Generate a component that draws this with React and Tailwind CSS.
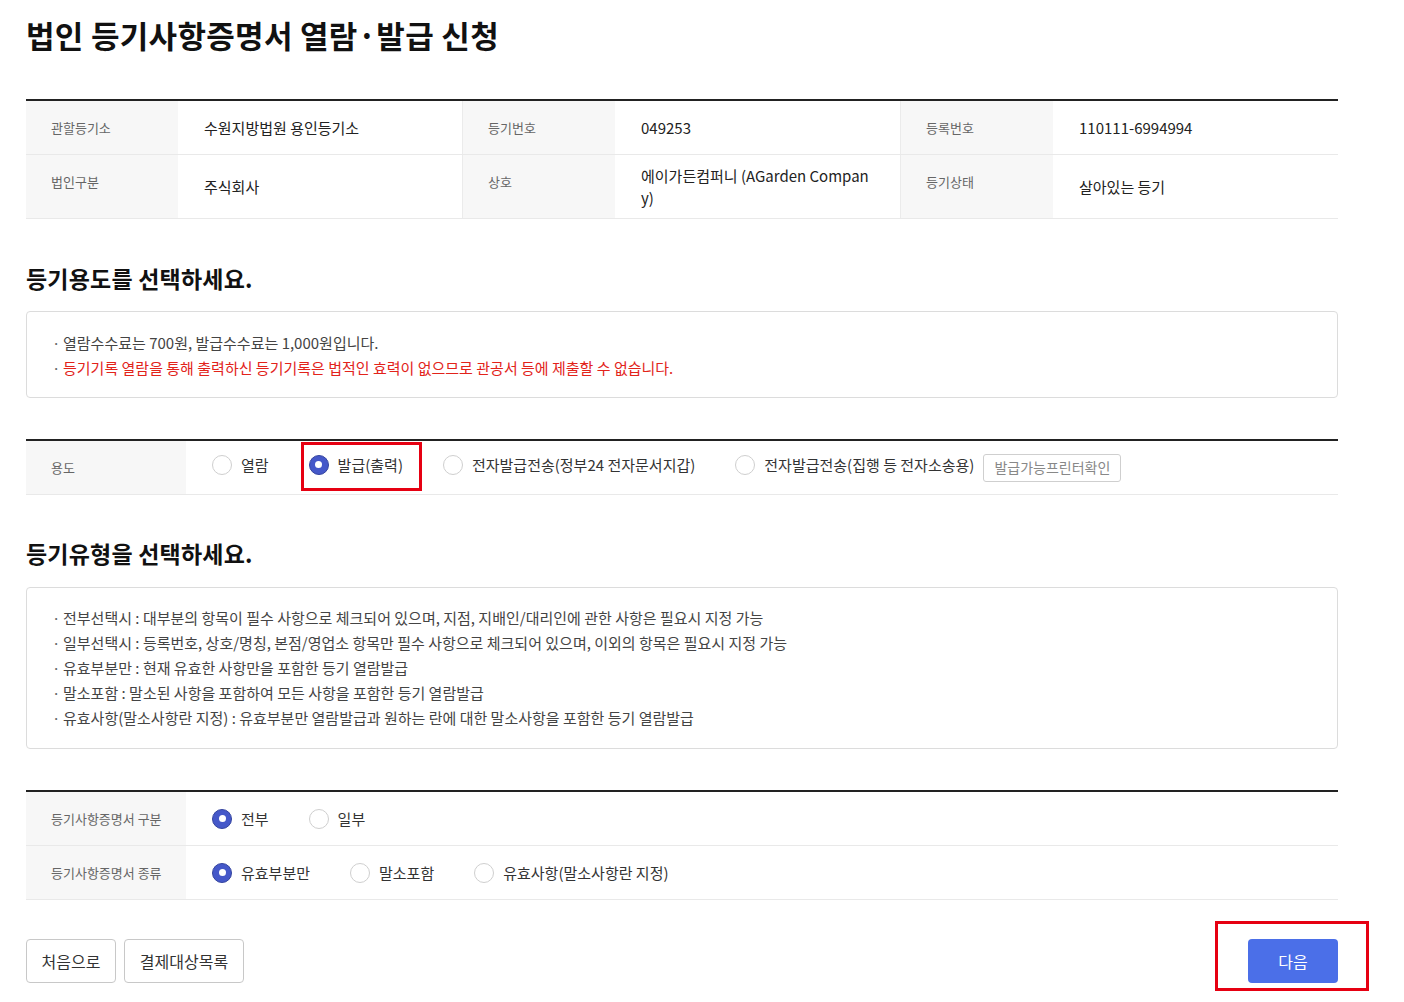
import React from "react";

const FONT = { fontFamily: '"Noto Sans CJK KR", "Noto Sans", sans-serif' };

function Radio({ checked, label, className = "" }) {
  return (
    <label className={"flex items-center gap-[9px] text-[15px] leading-[22px] text-[#333] " + className}>
      {checked ? (
        <span className="flex h-[20px] w-[20px] shrink-0 items-center justify-center rounded-full border border-[#34449f] bg-[#4558c9]">
          <span className="h-[7px] w-[7px] rounded-full bg-white" />
        </span>
      ) : (
        <span className="h-[20px] w-[20px] shrink-0 rounded-full border border-[#cfcfcf] bg-white" />
      )}
      <span>{label}</span>
    </label>
  );
}

function Label({ children, className = "" }) {
  return (
    <div className={"whitespace-nowrap bg-[#f7f7f7] pl-[25px] pr-[10px] text-[13px] text-[#666] " + className}>
      {children}
    </div>
  );
}

function Value({ children, className = "" }) {
  return (
    <div className={"flex items-center bg-white px-[26px] text-[15px] leading-[22px] text-[#222] " + className}>
      {children}
    </div>
  );
}

function Bullet({ children, red }) {
  return (
    <div className={"flex leading-[25px] " + (red ? "text-[#e2231a]" : "text-[#444]")}>
      <span className="w-[11px] shrink-0 text-[#666]">·</span>
      <span>{children}</span>
    </div>
  );
}

export default function App() {
  const cols = "grid grid-cols-[152px_284px_153px_285px_153px_285px] border-b border-[#e9e9e9]";
  return (
    <div style={FONT} className="min-h-[1002px] bg-white">
      <div className="ml-[26px] w-[1312px] pt-[15px]">
        <h1 className="text-[31px] font-bold leading-[40px] tracking-[0.3px] text-[#111]">
          법인 등기사항증명서 열람·발급 신청
        </h1>

        {/* Info table */}
        <div className="mt-[44px] border-t-2 border-[#222]">
          <div className={cols}>
            <Label className="h-[53px] pt-[16px] leading-[22px]">관할등기소</Label>
            <Value>수원지방법원 용인등기소</Value>
            <Label className="border-l border-[#ebebeb] pt-[16px] leading-[22px]">등기번호</Label>
            <Value>049253</Value>
            <Label className="border-l border-[#ebebeb] pt-[16px] leading-[22px]">등록번호</Label>
            <Value>110111-6994994</Value>
          </div>
          <div className={cols}>
            <Label className="h-[63px] pt-[16px] leading-[22px]">법인구분</Label>
            <Value>주식회사</Value>
            <Label className="border-l border-[#ebebeb] pt-[16px] leading-[22px]">상호</Label>
            <Value className="break-all">에이가든컴퍼니 (AGarden Company)</Value>
            <Label className="border-l border-[#ebebeb] pt-[16px] leading-[22px]">등기상태</Label>
            <Value>살아있는 등기</Value>
          </div>
        </div>

        <h2 className="mt-[44px] text-[23px] font-bold leading-[30px] tracking-[0.2px] text-[#111]">
          등기용도를 선택하세요.
        </h2>
        <div className="mt-[18px] rounded-[4px] border border-[#dcdcdc] px-[25px] pb-[17px] pt-[18px] text-[15px]">
          <Bullet>열람수수료는 700원, 발급수수료는 1,000원입니다.</Bullet>
          <Bullet red>등기기록 열람을 통해 출력하신 등기기록은 법적인 효력이 없으므로 관공서 등에 제출할 수 없습니다.</Bullet>
        </div>

        {/* 용도 */}
        <div className="mt-[41px] border-t-2 border-[#222]">
          <div className="flex h-[54px] border-b border-[#e9e9e9]">
            <Label className="flex w-[160px] shrink-0 items-center">용도</Label>
            <div className="flex items-center gap-[40px] pl-[26px]">
              <Radio label="열람" className="mb-[6px]" />
              <div className="relative mb-[6px]">
                <Radio checked label="발급(출력)" />
                <span className="pointer-events-none absolute -bottom-[15px] -left-[8px] -right-[19px] -top-[12px] border-[3px] border-[#e60012]" />
              </div>
              <Radio label="전자발급전송(정부24 전자문서지갑)" className="mb-[6px]" />
              <div className="flex items-center gap-[9px]">
                <Radio label="전자발급전송(집행 등 전자소송용)" className="mb-[6px]" />
                <button className="h-[28px] rounded-[3px] border border-[#cfcfcf] bg-white px-[10px] text-[14px] text-[#888]">
                  발급가능프린터확인
                </button>
              </div>
            </div>
          </div>
        </div>

        <h2 className="mt-[43px] text-[23px] font-bold leading-[30px] tracking-[0.2px] text-[#111]">
          등기유형을 선택하세요.
        </h2>
        <div className="mt-[19px] rounded-[4px] border border-[#dcdcdc] px-[25px] pb-[18px] pt-[17px] text-[15px]">
          <Bullet>전부선택시 : 대부분의 항목이 필수 사항으로 체크되어 있으며, 지점, 지배인/대리인에 관한 사항은 필요시 지정 가능</Bullet>
          <Bullet>일부선택시 : 등록번호, 상호/명칭, 본점/영업소 항목만 필수 사항으로 체크되어 있으며, 이외의 항목은 필요시 지정 가능</Bullet>
          <Bullet>유효부분만 : 현재 유효한 사항만을 포함한 등기 열람발급</Bullet>
          <Bullet>말소포함 : 말소된 사항을 포함하여 모든 사항을 포함한 등기 열람발급</Bullet>
          <Bullet>유효사항(말소사항란 지정) : 유효부분만 열람발급과 원하는 란에 대한 말소사항을 포함한 등기 열람발급</Bullet>
        </div>

        {/* 구분/종류 */}
        <div className="mt-[41px] border-t-2 border-[#222]">
          <div className="flex h-[54px] border-b border-[#e9e9e9]">
            <Label className="flex w-[160px] shrink-0 items-center">등기사항증명서 구분</Label>
            <div className="flex items-center gap-[40px] pl-[26px]">
              <Radio checked label="전부" />
              <Radio label="일부" />
            </div>
          </div>
          <div className="flex h-[54px] border-b border-[#e9e9e9]">
            <Label className="flex w-[160px] shrink-0 items-center">등기사항증명서 종류</Label>
            <div className="flex items-center gap-[40px] pl-[26px]">
              <Radio checked label="유효부분만" />
              <Radio label="말소포함" />
              <Radio label="유효사항(말소사항란 지정)" />
            </div>
          </div>
        </div>

        {/* Buttons */}
        <div className="mt-[39px] flex items-start justify-between">
          <div className="flex gap-[8px]">
            <button className="h-[44px] w-[90px] rounded-[4px] border border-[#c8c8c8] bg-white text-[16px] text-[#333]">
              처음으로
            </button>
            <button className="h-[44px] w-[120px] rounded-[4px] border border-[#c8c8c8] bg-white text-[16px] text-[#333]">
              결제대상목록
            </button>
          </div>
          <div className="relative">
            <button className="h-[44px] w-[90px] rounded-[4px] bg-[#4b6fe8] text-[16px] text-white">
              다음
            </button>
            <span className="pointer-events-none absolute -bottom-[8px] -left-[33px] -right-[31px] -top-[18px] border-[3px] border-[#e60012]" />
          </div>
        </div>
      </div>
    </div>
  );
}
